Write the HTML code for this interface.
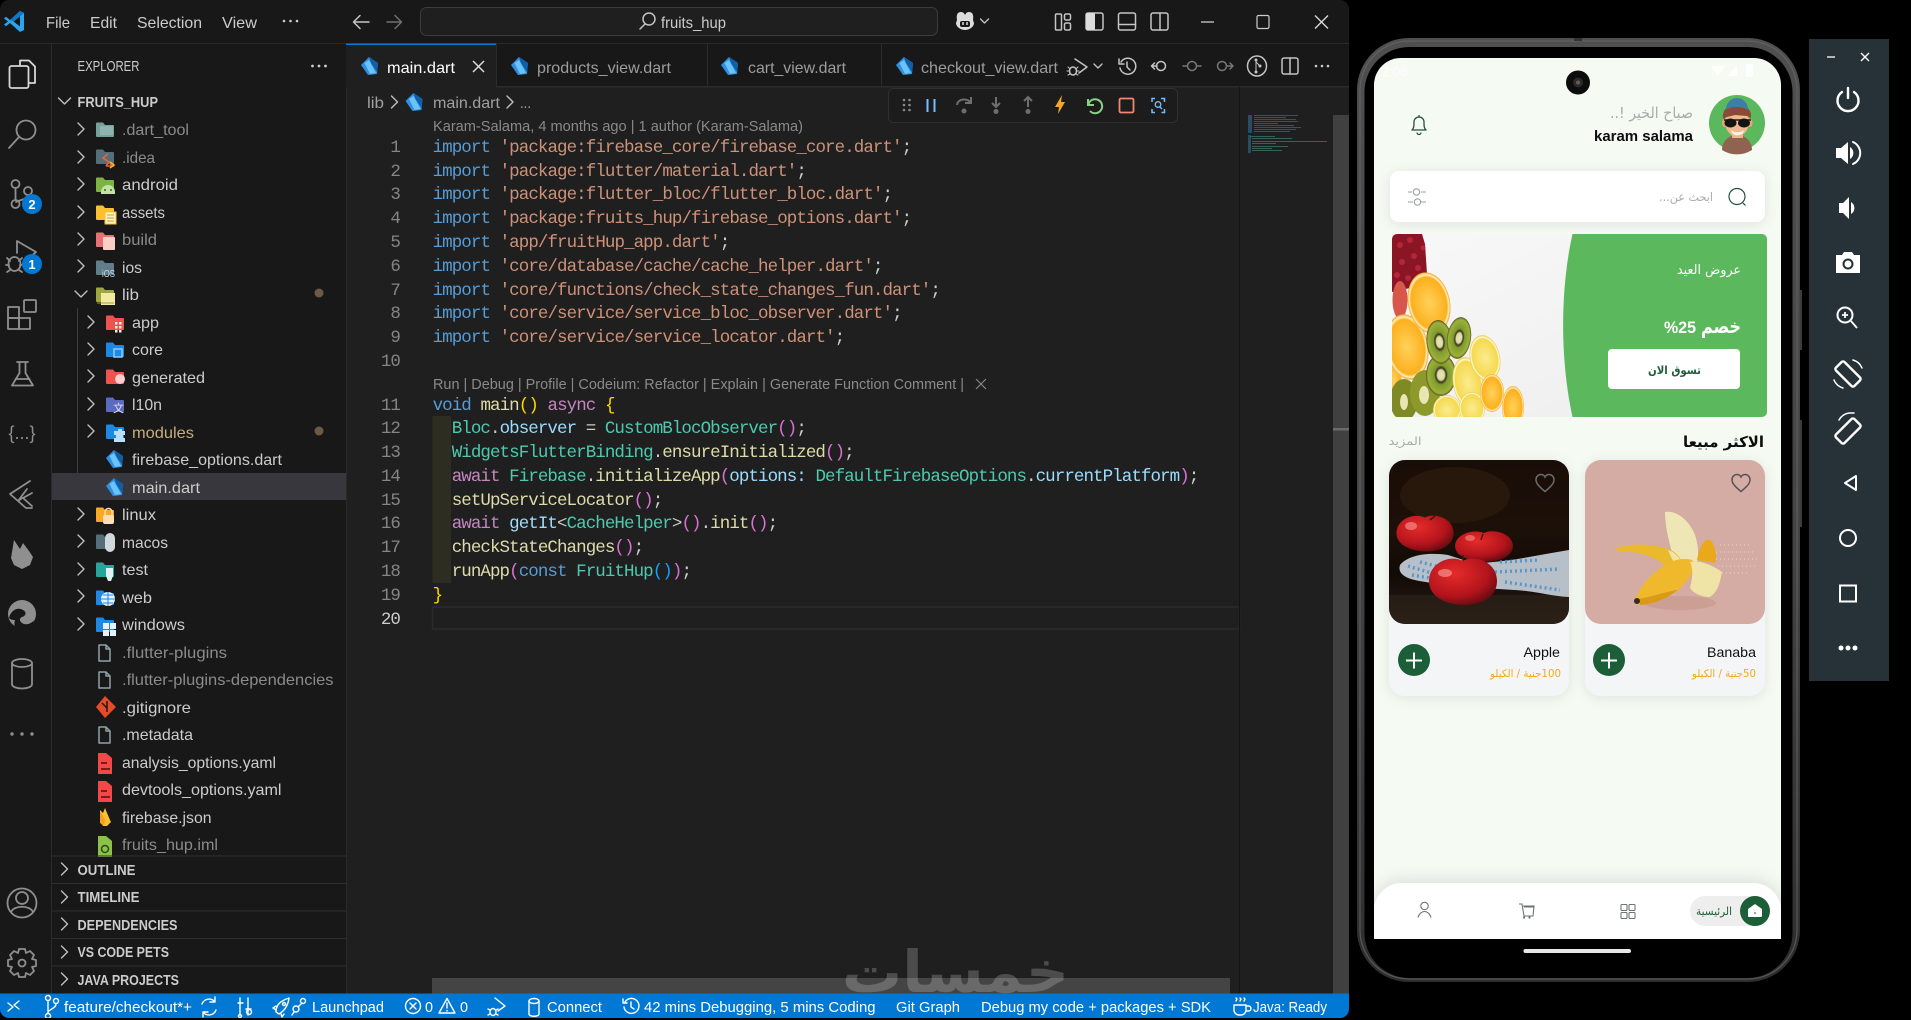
<!DOCTYPE html>
<html><head><meta charset="utf-8"><title>VS Code and Emulator</title>
<style>
html,body{margin:0;padding:0;background:#000;width:1911px;height:1020px;overflow:hidden}
svg{display:block}
text{font-family:"Liberation Sans",sans-serif;font-size:16px;fill:#ccc;white-space:pre}
.m{fill:#ccc}
.g{fill:#8b8b8b}
.b{font-weight:bold;font-size:14.5px;fill:#ccc}
.c{font-family:"Liberation Mono",monospace;font-size:17.5px;letter-spacing:-.93px;fill:#ccc}
.n{font-family:"Liberation Mono",monospace;font-size:17.5px;letter-spacing:-.93px;fill:#858585;text-anchor:end}
.s{font-size:15px;fill:#fff}
.a{font-family:"DejaVu Sans",sans-serif;direction:rtl}
.k{fill:#569cd6}.r{fill:#ce9178}.y{fill:#dcdcaa}.t{fill:#4ec9b0}.v{fill:#9cdcfe}.p{fill:#c586c0}.o{fill:#da70d6}.u{fill:#ffd700}.l{fill:#179fff}
.i{fill:none;stroke:#c4c4c4;stroke-width:1.5;stroke-linecap:round;stroke-linejoin:round}
.ab{fill:none;stroke:#8f8f8f;stroke-width:1.8;stroke-linecap:round;stroke-linejoin:round}
.st{fill:none;stroke:#fff;stroke-width:1.4;stroke-linecap:round;stroke-linejoin:round}
.ch{fill:none;stroke:#c0c0c0;stroke-width:1.4;stroke-linecap:round;stroke-linejoin:round}
.em{fill:none;stroke:#fff;stroke-width:2.4;stroke-linecap:round;stroke-linejoin:round}
</style></head><body>
<svg xmlns="http://www.w3.org/2000/svg" width="1911" height="1020" viewBox="0 0 1911 1020">
<defs>
<g id="dart"><path d="M8 0 17 6 16 17 7 18 0 8Z" fill="#2f8fe0"/><path d="M8 0 17 6 16 15 10 6Z" fill="#0f5ea6"/><path d="M3.500 6 8 3 15 16 9 17Z" fill="#6cc3fa"/></g>
<g id="chr"><path d="M-3-6 3 0-3 6" class="ch"/></g>
<g id="chd"><path d="M-6-3 0 3 6-3" class="ch"/></g>
<path id="fold" d="M0 1.500a1 1 0 0 1 1-1h6l2 2.500h8a1 1 0 0 1 1 1v10a1 1 0 0 1-1 1H1a1 1 0 0 1-1-1Z"/>
<path id="doc" d="M1 1h7l4 4v12H1ZM8 1v4h4" fill="none" stroke="#8ea2a8" stroke-width="1.500" stroke-linejoin="round"/>
<path id="heart" d="M10 18C4 13 1 10 1 6.200 1 3 3.500 1 6 1c1.800 0 3.200 1 4 2.500C10.800 2 12.200 1 14 1c2.500 0 5 2 5 5.200C19 10 16 13 10 18Z" fill="none" stroke-width="1.500"/>
<path id="apple" d="M0-20C10-27 34-20 34 0 34 17 17 24 2 24-15 24-34 17-34 0-34-18-13-27 0-20Z"/>
<linearGradient id="bgcurve" x1="0" y1="0" x2="1" y2="1"><stop offset="0" stop-color="#f8f8f8"/><stop offset="1" stop-color="#ededed"/></linearGradient>
<linearGradient id="apl" x1="0" y1="0" x2="0" y2="1"><stop offset="0" stop-color="#190d07"/><stop offset=".45" stop-color="#1c1008"/><stop offset=".7" stop-color="#120a06"/><stop offset="1" stop-color="#2a2018"/></linearGradient>
<radialGradient id="red" cx=".38" cy=".32" r=".75"><stop offset="0" stop-color="#e62b2a"/><stop offset=".65" stop-color="#b3141c"/><stop offset="1" stop-color="#5e0a10"/></radialGradient>
<radialGradient id="orng" cx=".5" cy=".5" r=".5"><stop offset="0" stop-color="#ffd25a"/><stop offset=".84" stop-color="#fcb01e"/><stop offset=".92" stop-color="#fff0c2"/><stop offset="1" stop-color="#f59e12"/></radialGradient>
<radialGradient id="lem" cx=".5" cy=".5" r=".5"><stop offset="0" stop-color="#fbec8e"/><stop offset=".84" stop-color="#f5d94f"/><stop offset=".92" stop-color="#fffbe3"/><stop offset="1" stop-color="#e8c22d"/></radialGradient>
<radialGradient id="kiwi" cx=".5" cy=".5" r=".5"><stop offset="0" stop-color="#e9e6b8"/><stop offset=".24" stop-color="#dcdca0"/><stop offset=".34" stop-color="#38331f"/><stop offset=".46" stop-color="#7f9a2d"/><stop offset=".88" stop-color="#9bb23a"/><stop offset="1" stop-color="#5e4d22"/></radialGradient>
<linearGradient id="frame" x1="0" y1="0" x2="0" y2="1"><stop offset="0" stop-color="#4f4f4f"/><stop offset=".5" stop-color="#444"/><stop offset="1" stop-color="#2e2e2e"/></linearGradient>
<clipPath id="win"><rect x="0" y="0" width="1349" height="1018" rx="9"/></clipPath>
<clipPath id="screen"><path d="M1374 939V85a27 27 0 0 1 27-27h353a27 27 0 0 1 27 27v854Z"/></clipPath>
<clipPath id="ban"><rect x="1392" y="234" width="375" height="183" rx="5"/></clipPath>
<clipPath id="cl1"><path d="M1389 608V476a16 16 0 0 1 16-16h148a16 16 0 0 1 16 16v132a16 16 0 0 1-16 16H1405a16 16 0 0 1-16-16Z"/></clipPath>
<filter id="sh" x="-20%" y="-20%" width="140%" height="140%"><feDropShadow dx="0" dy="2" stdDeviation="6" flood-color="#000" flood-opacity=".09"/></filter>
<filter id="sh2" x="-5%" y="-40%" width="110%" height="180%"><feDropShadow dx="0" dy="-2" stdDeviation="8" flood-color="#000" flood-opacity=".12"/></filter>
</defs>

<!-- VS CODE WINDOW -->
<g clip-path="url(#win)">
<rect width="1349" height="1018" fill="#181818"/>
<rect x="346" y="87" width="1003" height="907" fill="#1f1f1f"/>
<rect x="0" y="43" width="1349" height="1" fill="#2b2b2b"/>
<rect x="51" y="44" width="1" height="950" fill="#2b2b2b"/>
<rect x="346" y="44" width="1" height="950" fill="#2b2b2b"/>
<rect x="346" y="86" width="1003" height="1.500" fill="#2b2b2b"/>

<!-- Title bar -->
<path d="M20 11 10 20 6 16.800 4 18.500 8 21.500 4 24.500 6 26.200 10 23 20 32 24 30V13ZM20 16.500V26.500L13.500 21.500Z" fill="#2aa6ee" fill-rule="evenodd"/>
<path d="M20 11 10 20 13.500 21.500 20 16.500 24 13Z" fill="#1177c6"/>
<text x="46" y="28" textLength="24" lengthAdjust="spacingAndGlyphs">File</text>
<text x="90" y="28" textLength="27" lengthAdjust="spacingAndGlyphs">Edit</text>
<text x="137" y="28" textLength="65" lengthAdjust="spacingAndGlyphs">Selection</text>
<text x="222" y="28" textLength="35" lengthAdjust="spacingAndGlyphs">View</text>
<g fill="#ccc"><circle cx="284" cy="21" r="1.300"/><circle cx="290.500" cy="21" r="1.300"/><circle cx="297" cy="21" r="1.300"/></g>
<path d="M369 22H354M360 15.500 353.500 22 360 28.500" class="i" stroke="#ccc"/>
<path d="M387 22H401M395 15.500 401.500 22 395 28.500" class="ab" style="stroke:#6f6f6f;stroke-width:1.500"/>
<rect x="420.500" y="7.500" width="517" height="28" rx="6" fill="#1f1f1f" stroke="#3c3c3c"/>
<circle cx="649" cy="19" r="6" class="i"/><path d="M645 24 640 29" class="i"/>
<text x="661" y="28" textLength="65" lengthAdjust="spacingAndGlyphs">fruits_hup</text>
<!-- copilot -->
<path d="M957 20c-1-6 1-8 4-8 2 0 3 1 4 3 1-2 2-3 4-3 3 0 5 2 4 8l1 3c0 4-5 7-9 7s-9-3-9-7Z" fill="#ddd"/>
<rect x="960" y="21" width="10" height="6" rx="2" fill="#181818"/><path d="M963 22v3M967 22v3" stroke="#ddd" stroke-width="1.500"/>
<path d="M980.500 19 984.500 23 988.500 19" class="ch"/>
<!-- layout icons -->
<rect x="1055.500" y="14" width="6" height="16" rx="1" class="i"/><rect x="1064.500" y="14" width="6" height="6" rx="1.500" class="i"/><rect x="1064.500" y="23" width="6" height="7" rx="1.500" class="i"/>
<rect x="1086" y="13" width="17" height="17" rx="2" class="i" stroke="#ddd"/><rect x="1086" y="13" width="9" height="17" rx="1.500" fill="#ddd"/>
<rect x="1118.500" y="13" width="17" height="17" rx="2" class="i"/><path d="M1118.500 24.500h17" class="i"/>
<rect x="1151" y="13" width="17" height="17" rx="2" class="i"/><path d="M1160 13v17" class="i"/>
<path d="M1201 22h13" stroke="#ccc" stroke-width="1.300"/>
<rect x="1257" y="15.500" width="12" height="13" rx="1.500" fill="none" stroke="#ccc" stroke-width="1.200"/>
<path d="M1315 15.500 1328 28.500M1328 15.500 1315 28.500" stroke="#ddd" stroke-width="1.300"/>

<!-- Activity bar -->
<path d="M20 65V60.500h9l6 6V83h-6" class="ab" style="stroke:#d6d6d6"/><rect x="9.500" y="66" width="19" height="22" rx="2" class="ab" style="stroke:#d6d6d6"/>
<circle cx="26" cy="130" r="9.500" class="ab"/><path d="M19 137 9 148" class="ab"/>
<circle cx="15.500" cy="184" r="4" class="ab"/><circle cx="15.500" cy="204" r="4" class="ab"/><circle cx="28" cy="191" r="4" class="ab"/><path d="M15.500 188v12M28 195c0 4-8 5-12 7" class="ab"/>
<path d="M17 241v12M17 241 36 252 24 262" class="ab"/><ellipse cx="14.500" cy="264" rx="6" ry="7" class="ab"/><path d="M7 258l3 3M22 258l-3 3M6 265h3M20 265h3M7 272l3-2M22 272l-3-2" class="ab"/>
<rect x="8" y="318" width="11" height="11" class="ab"/><rect x="19" y="318" width="11" height="11" class="ab"/><rect x="8" y="307" width="11" height="11" class="ab"/><rect x="24" y="300" width="12" height="12" rx="1" class="ab"/>
<circle cx="32" cy="204" r="10" fill="#0078d4"/><text x="32" y="209" text-anchor="middle" style="font-size:13px;font-weight:bold;fill:#fff">2</text>
<circle cx="32" cy="264" r="10" fill="#0078d4"/><text x="32" y="269" text-anchor="middle" style="font-size:13px;font-weight:bold;fill:#fff">1</text>
<path d="M17 362h11M19.500 362v11L12 385.500h21L25.500 373v-11M15.500 379h14" class="ab"/>
<text x="22" y="439" text-anchor="middle" textLength="27" lengthAdjust="spacingAndGlyphs" style="font-size:18px;fill:#8f8f8f">{...}</text>
<path d="M30 481 10 494l8 7 9-12M32 506l-9-8 9-5M22 498l-4 3 8 7h6" class="ab"/>
<path d="M14 540l6 9 3-6 6 8 4 6-3 8-8 4-8-4-3-7Z" fill="#8f8f8f"/>
<circle cx="22" cy="614" r="14" fill="#8f8f8f"/><path d="M9 618c2-9 10-11 14-8 4 2 3 6-1 7-3 1-3 5 2 7 4 1 8-1 10-4-2 9-11 12-17 9-3-2-3-6-2-9-2 0-4 0-6-2Z" fill="#181818"/>
<path d="M12 663v21c0 6 20 6 20 0v-21" class="ab"/><ellipse cx="22" cy="663" rx="10" ry="4" class="ab"/>
<g fill="#8f8f8f"><circle cx="12" cy="734" r="1.700"/><circle cx="22" cy="734" r="1.700"/><circle cx="32" cy="734" r="1.700"/></g>
<circle cx="22" cy="903" r="14.500" class="ab"/><circle cx="22" cy="898" r="6" class="ab"/><path d="M11 912c3-7 19-7 22 0" class="ab"/>
<path d="M19 949h6l1 4 4-2 4 4-2 4 4 1v6l-4 1 2 4-4 4-4-2-1 4h-6l-1-4-4 2-4-4 2-4-4-1v-6l4-1-2-4 4-4 4 2Z" class="ab"/><circle cx="22" cy="963" r="3.500" class="ab"/>

<!-- Explorer -->
<text x="77.500" y="71" textLength="62" lengthAdjust="spacingAndGlyphs" style="font-size:14.500px">EXPLORER</text>
<g fill="#ccc"><circle cx="312.500" cy="66" r="1.400"/><circle cx="319" cy="66" r="1.400"/><circle cx="325.500" cy="66" r="1.400"/></g>
<use href="#chd" x="64.500" y="101"/>
<text class="b" x="77.500" y="107" textLength="80.500" lengthAdjust="spacingAndGlyphs">FRUITS_HUP</text>
<rect x="77" y="308" width="1" height="192" fill="#3d3d3d"/>
<rect x="52" y="473" width="294" height="27" fill="#37373d"/>

<!-- chevrons -->
<use href="#chr" x="81" y="129"/><use href="#chr" x="81" y="157"/><use href="#chr" x="81" y="184"/><use href="#chr" x="81" y="212"/><use href="#chr" x="81" y="239"/><use href="#chr" x="81" y="266"/><use href="#chd" x="81" y="294"/>
<use href="#chr" x="91" y="322"/><use href="#chr" x="91" y="349"/><use href="#chr" x="91" y="376"/><use href="#chr" x="91" y="404"/><use href="#chr" x="91" y="431"/>
<use href="#chr" x="81" y="514"/><use href="#chr" x="81" y="541"/><use href="#chr" x="81" y="569"/><use href="#chr" x="81" y="596"/><use href="#chr" x="81" y="624"/>

<!-- folders -->
<use href="#fold" x="96" y="122" fill="#78a09a"/><rect x="100" y="126" width="13" height="9" fill="#8fb3ae"/>
<use href="#fold" x="96" y="149" fill="#546e7a"/><path d="M108 154l-5 4 6 4-3 4M106 166h8l-4-2" fill="none" stroke="#e8643c" stroke-width="1.600"/><path d="M110 162l4 3-4 3" fill="none" stroke="#f5b324" stroke-width="1.600"/>
<use href="#fold" x="96" y="177" fill="#7cb342"/><path d="M101 192a7 7 0 0 1 14 0v2h-14Z" fill="#c5e1a5"/><circle cx="105" cy="190" r="1" fill="#33691e"/><circle cx="111" cy="190" r="1" fill="#33691e"/>
<use href="#fold" x="96" y="205" fill="#fbc02d"/><rect x="105" y="212" width="11" height="12" fill="#fff3c4" stroke="#fbc02d"/><path d="M107 215h7M107 218h7M107 221h7" stroke="#c9a227"/>
<use href="#fold" x="96" y="232" fill="#e57373"/><rect x="103" y="237" width="12" height="13" rx="1" fill="#f8d0c8"/>
<use href="#fold" x="96" y="260" fill="#607d8b"/><text x="102" y="277" textLength="13" lengthAdjust="spacingAndGlyphs" style="font-size:10px;fill:#cfd8dc">iOS</text>
<use href="#fold" x="96" y="287" fill="#9ea640"/><rect x="101" y="293" width="14" height="12" fill="#f2e9a3"/><path d="M97 303h17l-3 0" stroke="#9ea640"/>
<use href="#fold" x="106" y="315" fill="#ef5350"/><g fill="#fbe9e7"><rect x="115" y="322" width="2.500" height="2.500"/><rect x="119" y="322" width="2.500" height="2.500"/><rect x="115" y="326" width="2.500" height="2.500"/><rect x="119" y="326" width="2.500" height="2.500"/><rect x="115" y="330" width="2.500" height="2.500"/><rect x="119" y="330" width="2.500" height="2.500"/></g>
<use href="#fold" x="106" y="342" fill="#1e88e5"/><rect x="114" y="349" width="8" height="8" fill="none" stroke="#90caf9" stroke-width="1.500"/>
<use href="#fold" x="106" y="369" fill="#ef5350"/><circle cx="120" cy="379" r="5" fill="#ffcdd2"/>
<use href="#fold" x="106" y="397" fill="#5c6bc0"/><text x="113" y="412" style="font-size:11px;fill:#dfe3f5;font-family:'Liberation Sans','Noto Sans CJK SC',sans-serif">文</text>
<use href="#fold" x="106" y="424" fill="#1e88e5"/><path d="M114 431h4v-2h4v2h3v4h-2v3h2v4h-11v-4h2v-3h-2Z" fill="#bbdefb"/>
<use href="#dart" x="106" y="450"/><use href="#dart" x="106" y="478"/>
<use href="#fold" x="96" y="507" fill="#f9a825"/><rect x="103" y="515" width="11" height="9" rx="2" fill="#ffe0b2"/><path d="M105 515v-3a3.500 3.500 0 0 1 7 0v3" fill="none" stroke="#ffe0b2" stroke-width="1.500"/>
<use href="#fold" x="96" y="534" fill="#546e7a"/><path d="M105 538a5 5 0 0 1 10 0v9c0 3-3 5-5 5s-5-2-5-5Z" fill="#cfd8dc"/>
<use href="#fold" x="96" y="562" fill="#26a69a"/><path d="M106 568h7v8l-2 5h-3l-2-5Z" fill="#e0f2f1"/>
<use href="#fold" x="96" y="590" fill="#1e88e5"/><circle cx="108" cy="599" r="7" fill="#e3f2fd"/><path d="M101 599h14M108 592v14M103 595h10M103 603h10" stroke="#1e88e5"/>
<use href="#fold" x="96" y="617" fill="#1e88e5"/><g fill="#e3f2fd"><rect x="103" y="623" width="6" height="6"/><rect x="110" y="623" width="6" height="6"/><rect x="103" y="630" width="6" height="6"/><rect x="110" y="630" width="6" height="6"/></g>

<!-- file icons -->
<use href="#doc" x="98" y="644"/>
<use href="#doc" x="98" y="671"/>
<path d="M105 696 116 707 105 718 96 707Z" fill="#e64a28"/><path d="M102 703l5 5M107 701v11" stroke="#1b1b1b" stroke-width="1.500"/>
<use href="#doc" x="98" y="726"/>
<path d="M98 753h8l6 5v16H98Z" fill="#f44747"/><path d="M101 763h6M101 769h9" stroke="#4a1010" stroke-width="1.600"/>
<path d="M98 781h8l6 5v16H98Z" fill="#f44747"/><path d="M101 791h6M101 797h9" stroke="#4a1010" stroke-width="1.600"/>
<path d="M100 810l3 3 2-5 5 12 1 2-4 4-4 0-3-4Z" fill="#fbc02d"/><path d="M100 810l5 10-1 6-4-3Z" fill="#f6a021"/>
<path d="M98 836h8l6 5v16H98Z" fill="#8bc34a"/><circle cx="105" cy="849" r="3.500" fill="none" stroke="#2e4a12" stroke-width="1.500"/>

<!-- file text -->
<text class="g" x="122" y="135" textLength="67" lengthAdjust="spacingAndGlyphs">.dart_tool</text>
<text class="g" x="122" y="163" textLength="33" lengthAdjust="spacingAndGlyphs">.idea</text>
<text x="122" y="190" textLength="56" lengthAdjust="spacingAndGlyphs">android</text>
<text x="122" y="218" textLength="43" lengthAdjust="spacingAndGlyphs">assets</text>
<text class="g" x="122" y="245" textLength="35" lengthAdjust="spacingAndGlyphs">build</text>
<text x="122" y="273" textLength="20" lengthAdjust="spacingAndGlyphs">ios</text>
<text x="122" y="300" textLength="17" lengthAdjust="spacingAndGlyphs">lib</text>
<text x="132" y="328" textLength="27" lengthAdjust="spacingAndGlyphs">app</text>
<text x="132" y="355" textLength="31" lengthAdjust="spacingAndGlyphs">core</text>
<text x="132" y="383" textLength="73" lengthAdjust="spacingAndGlyphs">generated</text>
<text x="132" y="410" textLength="30" lengthAdjust="spacingAndGlyphs">l10n</text>
<text x="132" y="438" textLength="62" lengthAdjust="spacingAndGlyphs" style="fill:#c6ad7c">modules</text>
<text x="132" y="465" textLength="150" lengthAdjust="spacingAndGlyphs">firebase_options.dart</text>
<text x="132" y="493" textLength="68" lengthAdjust="spacingAndGlyphs">main.dart</text>
<text x="122" y="520" textLength="34" lengthAdjust="spacingAndGlyphs">linux</text>
<text x="122" y="548" textLength="46" lengthAdjust="spacingAndGlyphs">macos</text>
<text x="122" y="575" textLength="26" lengthAdjust="spacingAndGlyphs">test</text>
<text x="122" y="603" textLength="30" lengthAdjust="spacingAndGlyphs">web</text>
<text x="122" y="630" textLength="63" lengthAdjust="spacingAndGlyphs">windows</text>
<text class="g" x="122" y="658" textLength="105" lengthAdjust="spacingAndGlyphs">.flutter-plugins</text>
<text class="g" x="122" y="685" textLength="211.500" lengthAdjust="spacingAndGlyphs">.flutter-plugins-dependencies</text>
<text x="122" y="713" textLength="69" lengthAdjust="spacingAndGlyphs">.gitignore</text>
<text x="122" y="740" textLength="71" lengthAdjust="spacingAndGlyphs">.metadata</text>
<text x="122" y="768" textLength="154" lengthAdjust="spacingAndGlyphs">analysis_options.yaml</text>
<text x="122" y="795" textLength="159.500" lengthAdjust="spacingAndGlyphs">devtools_options.yaml</text>
<text x="122" y="823" textLength="89.500" lengthAdjust="spacingAndGlyphs">firebase.json</text>
<text class="g" x="122" y="850" textLength="96" lengthAdjust="spacingAndGlyphs">fruits_hup.iml</text>
<circle cx="319" cy="293" r="4.500" fill="#6b5a45"/><circle cx="319" cy="431" r="4.500" fill="#6b5a45"/>

<!-- Sections -->
<rect x="52" y="855.500" width="294" height="1" fill="#2f2f2f"/><rect x="52" y="883" width="294" height="1" fill="#2f2f2f"/><rect x="52" y="910.500" width="294" height="1" fill="#2f2f2f"/><rect x="52" y="938" width="294" height="1" fill="#2f2f2f"/><rect x="52" y="965.500" width="294" height="1" fill="#2f2f2f"/>
<use href="#chr" x="64.500" y="869"/><use href="#chr" x="64.500" y="897"/><use href="#chr" x="64.500" y="924"/><use href="#chr" x="64.500" y="952"/><use href="#chr" x="64.500" y="979"/>
<text class="b" x="77.500" y="875" textLength="58" lengthAdjust="spacingAndGlyphs">OUTLINE</text>
<text class="b" x="77.500" y="902" textLength="62" lengthAdjust="spacingAndGlyphs">TIMELINE</text>
<text class="b" x="77.500" y="930" textLength="100" lengthAdjust="spacingAndGlyphs">DEPENDENCIES</text>
<text class="b" x="77.500" y="957" textLength="91.500" lengthAdjust="spacingAndGlyphs">VS CODE PETS</text>
<text class="b" x="77.500" y="985" textLength="101.500" lengthAdjust="spacingAndGlyphs">JAVA PROJECTS</text>

<!-- Tabs -->
<rect x="346" y="44" width="150" height="43.500" fill="#1f1f1f"/><rect x="346" y="43.500" width="150" height="1.500" fill="#0078d4"/>
<rect x="496" y="44" width="1" height="43" fill="#2b2b2b"/><rect x="707" y="44" width="1" height="43" fill="#2b2b2b"/><rect x="881" y="44" width="1" height="43" fill="#2b2b2b"/>
<use href="#dart" x="361" y="57"/><text x="387" y="73" textLength="68" lengthAdjust="spacingAndGlyphs" style="fill:#fff">main.dart</text>
<path d="M473 61 484 72M484 61 473 72" stroke="#ddd" stroke-width="1.500"/>
<use href="#dart" x="511" y="57"/><text x="537" y="73" textLength="134" lengthAdjust="spacingAndGlyphs" style="fill:#9d9d9d">products_view.dart</text>
<use href="#dart" x="721" y="57"/><text x="748" y="73" textLength="98" lengthAdjust="spacingAndGlyphs" style="fill:#9d9d9d">cart_view.dart</text>
<use href="#dart" x="896" y="57"/><text x="921" y="73" textLength="137" lengthAdjust="spacingAndGlyphs" style="fill:#9d9d9d">checkout_view.dart</text>
<!-- editor actions -->
<path d="M1075 59 1087 67 1079 73" class="i"/><ellipse cx="1073" cy="71" rx="3.500" ry="4" class="i"/><path d="M1068 67l2 2M1078 67l-2 2M1067 71h2M1077 71h2M1068 75l2-1M1078 75l-2-1" class="i" style="stroke-width:1"/>
<path d="M1094 64l4 4 4-4" class="ch"/>
<path d="M1121 62a8 8 0 1 1-1 6M1119 59v5h5M1127 62v5l3 3" class="i"/>
<circle cx="1161" cy="66" r="4.500" class="i"/><path d="M1157 66h-5M1154.500 63l-3 3 3 3" class="i"/>
<circle cx="1192" cy="66" r="4.500" class="i" style="stroke:#777"/><path d="M1187 66h-4M1197 66h4" class="i" style="stroke:#777"/>
<circle cx="1222" cy="66" r="4.500" class="i" style="stroke:#777"/><path d="M1227 66h5M1230 63l3 3-3 3" class="i" style="stroke:#777"/>
<ellipse cx="1257" cy="66" rx="9.500" ry="10" class="i"/><circle cx="1256" cy="60" r="1.500" fill="#ccc"/><circle cx="1256" cy="72" r="1.500" fill="#ccc"/><circle cx="1260" cy="66" r="1.500" fill="#ccc"/><path d="M1256 60v12M1256 62l4 4" class="i" style="stroke-width:1"/>
<rect x="1282" y="58" width="16" height="16" rx="2" class="i"/><path d="M1290 58v16" class="i"/>
<g fill="#ccc"><circle cx="1316" cy="66" r="1.300"/><circle cx="1322" cy="66" r="1.300"/><circle cx="1328" cy="66" r="1.300"/></g>

<!-- Breadcrumb -->
<text x="367" y="108" textLength="17" lengthAdjust="spacingAndGlyphs" style="fill:#a0a0a0">lib</text>
<use href="#chr" x="394.500" y="102"/>
<use href="#dart" x="405.500" y="93"/>
<text x="433" y="108" textLength="67" lengthAdjust="spacingAndGlyphs" style="fill:#a0a0a0">main.dart</text>
<use href="#chr" x="510" y="102"/>
<text x="520" y="108" textLength="11" lengthAdjust="spacingAndGlyphs" style="fill:#a0a0a0">...</text>

<!-- Blame -->
<text x="433" y="131" textLength="370" lengthAdjust="spacingAndGlyphs" style="font-size:15px;fill:#8a8a8a">Karam-Salama, 4 months ago | 1 author (Karam-Salama)</text>

<!-- Editor decor -->
<rect x="432.500" y="416" width="18.500" height="167" fill="#2e2d22"/>
<rect x="432.500" y="607" width="807" height="22" fill="none" stroke="#2b2b2b" stroke-width="1.500"/>

<!-- Line numbers -->
<g>
<text class="n" x="400" y="152">1</text><text class="n" x="400" y="176">2</text><text class="n" x="400" y="199">3</text><text class="n" x="400" y="223">4</text><text class="n" x="400" y="247">5</text><text class="n" x="400" y="271">6</text><text class="n" x="400" y="295">7</text><text class="n" x="400" y="318">8</text><text class="n" x="400" y="342">9</text><text class="n" x="400" y="366">10</text>
<text class="n" x="400" y="410">11</text><text class="n" x="400" y="433">12</text><text class="n" x="400" y="457">13</text><text class="n" x="400" y="481">14</text><text class="n" x="400" y="505">15</text><text class="n" x="400" y="528">16</text><text class="n" x="400" y="552">17</text><text class="n" x="400" y="576">18</text><text class="n" x="400" y="600">19</text><text class="n" x="400" y="624" style="fill:#ccc">20</text>
</g>
<!-- Code -->
<text class="c" x="432.600" y="152"><tspan class="k">import</tspan> <tspan class="r">'package:firebase_core/firebase_core.dart'</tspan>;</text>
<text class="c" x="432.600" y="176"><tspan class="k">import</tspan> <tspan class="r">'package:flutter/material.dart'</tspan>;</text>
<text class="c" x="432.600" y="199"><tspan class="k">import</tspan> <tspan class="r">'package:flutter_bloc/flutter_bloc.dart'</tspan>;</text>
<text class="c" x="432.600" y="223"><tspan class="k">import</tspan> <tspan class="r">'package:fruits_hup/firebase_options.dart'</tspan>;</text>
<text class="c" x="432.600" y="247"><tspan class="k">import</tspan> <tspan class="r">'app/fruitHup_app.dart'</tspan>;</text>
<text class="c" x="432.600" y="271"><tspan class="k">import</tspan> <tspan class="r">'core/database/cache/cache_helper.dart'</tspan>;</text>
<text class="c" x="432.600" y="295"><tspan class="k">import</tspan> <tspan class="r">'core/functions/check_state_changes_fun.dart'</tspan>;</text>
<text class="c" x="432.600" y="318"><tspan class="k">import</tspan> <tspan class="r">'core/service/service_bloc_observer.dart'</tspan>;</text>
<text class="c" x="432.600" y="342"><tspan class="k">import</tspan> <tspan class="r">'core/service/service_locator.dart'</tspan>;</text>
<text x="433" y="389" textLength="531" lengthAdjust="spacingAndGlyphs" style="font-size:15px;fill:#8a8a8a">Run | Debug | Profile | Codeium: Refactor | Explain | Generate Function Comment |</text>
<path d="M976 379 986 389M986 379 976 389" stroke="#8a8a8a" stroke-width="1.100"/>
<text class="c" x="432.600" y="410"><tspan class="k">void</tspan> <tspan class="y">main</tspan><tspan class="u">()</tspan> <tspan class="p">async</tspan> <tspan class="u">{</tspan></text>
<text class="c" x="451.700" y="433"><tspan class="t">Bloc</tspan>.<tspan class="v">observer</tspan> = <tspan class="t">CustomBlocObserver</tspan><tspan class="o">()</tspan>;</text>
<text class="c" x="451.700" y="457"><tspan class="t">WidgetsFlutterBinding</tspan>.<tspan class="y">ensureInitialized</tspan><tspan class="o">()</tspan>;</text>
<text class="c" x="451.700" y="481"><tspan class="p">await</tspan> <tspan class="t">Firebase</tspan>.<tspan class="y">initializeApp</tspan><tspan class="o">(</tspan><tspan class="v">options:</tspan> <tspan class="t">DefaultFirebaseOptions</tspan>.<tspan class="v">currentPlatform</tspan><tspan class="o">)</tspan>;</text>
<text class="c" x="451.700" y="505"><tspan class="y">setUpServiceLocator</tspan><tspan class="o">()</tspan>;</text>
<text class="c" x="451.700" y="528"><tspan class="p">await</tspan> <tspan class="v">getIt</tspan>&lt;<tspan class="t">CacheHelper</tspan>&gt;<tspan class="o">()</tspan>.<tspan class="y">init</tspan><tspan class="o">()</tspan>;</text>
<text class="c" x="451.700" y="552"><tspan class="y">checkStateChanges</tspan><tspan class="o">()</tspan>;</text>
<text class="c" x="451.700" y="576"><tspan class="y">runApp</tspan><tspan class="o">(</tspan><tspan class="k">const</tspan> <tspan class="t">FruitHup</tspan><tspan class="l">()</tspan><tspan class="o">)</tspan>;</text>
<text class="c u" x="432.600" y="600">}</text>

<!-- minimap + scrollbars -->
<rect x="1239" y="87" width="1" height="907" fill="#141414"/>
<g opacity=".5">
<g fill="#2f7fa8"><rect x="1248" y="115" width="4" height="18"/><rect x="1248" y="135" width="3" height="18"/></g>
<g fill="#9a6f50"><rect x="1254" y="115" width="44" height="1"/><rect x="1254" y="117" width="32" height="1"/><rect x="1254" y="119" width="42" height="1"/><rect x="1254" y="121" width="44" height="1"/><rect x="1254" y="123" width="24" height="1"/><rect x="1254" y="125" width="40" height="1"/><rect x="1254" y="127" width="47" height="1"/><rect x="1254" y="129" width="42" height="1"/><rect x="1254" y="131" width="36" height="1"/></g>
<g fill="#4ea38f"><rect x="1250" y="136" width="25" height="1"/><rect x="1252" y="138" width="40" height="1"/><rect x="1252" y="141" width="75" height="1"/><rect x="1252" y="143" width="24" height="1"/><rect x="1252" y="146" width="36" height="1"/><rect x="1252" y="148" width="20" height="1"/><rect x="1252" y="150" width="30" height="1"/></g>
</g>
<rect x="1333" y="115" width="16" height="879" fill="#404040"/>
<rect x="1333" y="428" width="16" height="2.500" fill="#6a6a6a"/>
<rect x="432" y="978" width="798" height="15.500" fill="#444"/>

<!-- Debug toolbar -->
<rect x="888.500" y="88.500" width="289" height="34" rx="5" fill="#1c1c1c" stroke="#303030"/>
<g fill="#8a8a8a"><circle cx="904" cy="100" r="1.300"/><circle cx="909.500" cy="100" r="1.300"/><circle cx="904" cy="105" r="1.300"/><circle cx="909.500" cy="105" r="1.300"/><circle cx="904" cy="110" r="1.300"/><circle cx="909.500" cy="110" r="1.300"/></g>
<path d="M927.500 99v13M934.500 99v13" stroke="#75beff" stroke-width="2"/>
<path d="M957 105c1-7 11-7 14-2M971 97v6h-6" fill="none" stroke="#6e6e6e" stroke-width="2"/><circle cx="964" cy="111" r="2.500" fill="#6e6e6e"/>
<path d="M996 97v10M992 103l4 4 4-4" fill="none" stroke="#6e6e6e" stroke-width="2"/><circle cx="996" cy="111.500" r="2.500" fill="#6e6e6e"/>
<path d="M1028 107V97M1024 101l4-4 4 4" fill="none" stroke="#6e6e6e" stroke-width="2"/><circle cx="1028" cy="111.500" r="2.500" fill="#6e6e6e"/>
<path d="M1062 95 1055 107h4l-1 7 7-12h-4Z" fill="#f5a623"/>
<path d="M1088 99v6h6M1088.500 104a7 7 0 1 1 1.500 7" fill="none" stroke="#89d185" stroke-width="2"/>
<rect x="1119.500" y="98.500" width="14" height="14" rx="1.500" fill="none" stroke="#f48771" stroke-width="1.800"/>
<path d="M1152 102v-3.500h3M1161 98.500h3.500v3.500M1164.500 109v3.500h-3M1155 112.500h-3V109" fill="none" stroke="#75beff" stroke-width="1.500"/><circle cx="1158" cy="104.500" r="2.800" fill="none" stroke="#75beff" stroke-width="1.300"/><path d="M1160 107l2 2" stroke="#75beff" stroke-width="1.300"/>

<!-- Status bar -->
<rect x="0" y="993.500" width="1349" height="24.500" fill="#0078d4"/>
<path d="M8 1003 13 1007 8 1011M19 1001 14 1005 19 1009" class="st"/>
<circle cx="48" cy="998" r="2.500" class="st"/><circle cx="48" cy="1016" r="2.500" class="st"/><circle cx="56" cy="1001" r="2.500" class="st"/><path d="M48 1001v12M56 1004c0 4-6 5-8 8" class="st"/>
<text class="s" x="64" y="1012" textLength="128" lengthAdjust="spacingAndGlyphs">feature/checkout*+</text>
<path d="M202 1004a7.500 7.500 0 0 1 13-2M216 1010a7.500 7.500 0 0 1-13 2M215 997v5h-5M203 1017v-5h5" class="st"/>
<path d="M240 998v17M248 998v17M238 1003h5M246 1009h5" class="st"/><circle cx="240" cy="1016" r="1.500" class="st"/><circle cx="249" cy="1012" r="2.500" class="st"/>
<path d="M276 1012c0-7 4-11 13-14-1 8-5 13-10 16ZM276 1006l-3 2 3 2M281 1014l1 3 2-3" class="st"/><circle cx="284" cy="1004" r="1.500" class="st"/>
<circle cx="296" cy="1009" r="3" class="st"/><circle cx="303" cy="1001" r="2.500" class="st"/><path d="M298 1007l4-4M294 1012l-2 3" class="st"/>
<text class="s" x="312" y="1012" textLength="72" lengthAdjust="spacingAndGlyphs">Launchpad</text>
<circle cx="413" cy="1006" r="7.500" class="st"/><path d="M410 1003l6 6M416 1003l-6 6" class="st"/>
<text class="s" x="425" y="1012" textLength="8" lengthAdjust="spacingAndGlyphs">0</text>
<path d="M447 998.500 455 1013H439ZM447 1003v5M447 1010.500v.500" class="st"/>
<text class="s" x="460" y="1012" textLength="8" lengthAdjust="spacingAndGlyphs">0</text>
<path d="M495 998 505 1006 498 1011" class="st"/><ellipse cx="493" cy="1012" rx="3" ry="3.500" class="st"/><path d="M488 1009l2 1M498 1009l-2 1M488 1015l2-1M498 1015l-2-1" class="st"/>
<path d="M529 1001v13c0 3 10 3 10 0v-13" class="st"/><ellipse cx="534" cy="1001" rx="5" ry="2.500" class="st"/>
<text class="s" x="547" y="1012" textLength="55" lengthAdjust="spacingAndGlyphs">Connect</text>
<path d="M625 1002a7.500 7.500 0 1 1-1 5M623 999v4h4M631 1002v5l3 2" class="st"/>
<text class="s" x="644" y="1012" textLength="231.500" lengthAdjust="spacingAndGlyphs">42 mins Debugging, 5 mins Coding</text>
<text class="s" x="896" y="1012" textLength="64" lengthAdjust="spacingAndGlyphs">Git Graph</text>
<text class="s" x="981" y="1012" textLength="230" lengthAdjust="spacingAndGlyphs">Debug my code + packages + SDK</text>
<path d="M1234 1005h12v5a5 5 0 0 1-5 5h-2a5 5 0 0 1-5-5ZM1246 1006h2.500a2 2 0 0 1 0 5H1246M1236 1001l1-2-1-1M1240 1001l1-2-1-1M1244 1001l1-2-1-1" class="st"/>
<text class="s" x="1253" y="1012" textLength="74" lengthAdjust="spacingAndGlyphs">Java: Ready</text>

<!-- Watermark -->
<text class="a" x="1069" y="992" textLength="227" lengthAdjust="spacingAndGlyphs" style="font-size:58px;font-weight:bold;fill:#fff;opacity:.2">خمسات</text>
</g>

<!-- PHONE -->
<rect x="1357" y="38" width="443" height="944" rx="52" fill="url(#frame)"/>
<rect x="1360" y="41" width="437" height="938" rx="49" fill="none" stroke="#6a6a6a" stroke-width="1.200" opacity=".7"/>
<rect x="1364.500" y="47" width="428" height="931" rx="45" fill="#000"/>
<rect x="1800" y="290" width="2" height="60" fill="#3c3c3c"/><rect x="1800" y="420" width="2" height="107" fill="#3c3c3c"/>
<rect x="1574" y="38" width="8" height="3" fill="#333"/>
<g clip-path="url(#screen)">
<rect x="1374" y="58" width="407" height="881" fill="#f5faf3"/>
<!-- status -->
<text x="1382" y="76" style="font-size:13px;fill:#fff;opacity:.75">2:08</text>
<path d="M1711 66h14l-7 10Z" fill="#fff"/><path d="M1727 76l10-10v10Z" fill="#fff" opacity=".85"/><rect x="1746" y="64" width="7" height="13" rx="1.500" fill="#fff"/>
<!-- header -->
<circle cx="1737" cy="123" r="28" fill="#5cb85c"/>
<path d="M1722 150c0-8 6-15 15-15s15 7 15 15a28 28 0 0 1-30 0Z" fill="#8f6350"/>
<rect x="1732" y="130" width="11" height="8" fill="#f0b48a"/>
<ellipse cx="1737" cy="122" rx="12" ry="14.500" fill="#f1b88f"/>
<ellipse cx="1724.500" cy="123" rx="2.500" ry="4" fill="#e8a578"/><ellipse cx="1750" cy="123" rx="2.500" ry="4" fill="#e8a578"/>
<path d="M1723 119c-1-9 5-15 14-15s15 6 14 14l-4-2-12-1-8 2Z" fill="#8a4a36"/>
<path d="M1726 110c0-8 6-12 11-12s11 4 11 12c-6-4-16-4-22 0Z" fill="#3b7ea8"/>
<path d="M1724 120h27" stroke="#1b1b1b" stroke-width="1.500"/>
<ellipse cx="1730.500" cy="123" rx="6" ry="4.500" fill="#141414"/><ellipse cx="1744" cy="123" rx="6" ry="4.500" fill="#141414"/>
<path d="M1731 130c3 3 10 3 13 0l-1 3c-3 3-9 3-11 0Z" fill="#f8f3ea"/>
<text class="a" x="1693" y="118" textLength="83" lengthAdjust="spacingAndGlyphs" style="font-size:15px;fill:#a9adaa">صباح الخير !..</text>
<text x="1594" y="141" textLength="99" lengthAdjust="spacingAndGlyphs" style="font-size:15px;font-weight:bold;fill:#0c0d0d">karam salama</text>
<path d="M1412 130c2-2 2-4 2-8a5 5 0 0 1 10 0c0 4 0 6 2 8ZM1419 115v2M1417 132.500a2 2 0 0 0 4 0" fill="none" stroke="#24513a" stroke-width="1.300" stroke-linejoin="round"/>
<!-- camera -->
<circle cx="1578" cy="82.500" r="12" fill="#0c0c0c"/><circle cx="1578" cy="82.500" r="5" fill="#2b2b2b"/><circle cx="1578" cy="82.500" r="2" fill="#6b5a52"/>
<!-- search -->
<rect x="1390" y="171" width="375" height="51" rx="9" fill="#fff" filter="url(#sh)"/>
<circle cx="1737" cy="196.500" r="8" fill="none" stroke="#24513a" stroke-width="1.200"/><path d="M1743 203l2.500 2.500" stroke="#24513a" stroke-width="1.200"/>
<text class="a" x="1713" y="201" textLength="54" lengthAdjust="spacingAndGlyphs" style="font-size:12px;fill:#a9adaa">ابحث عن...</text>
<path d="M1408 192h4M1421 192h5M1408 202h5M1421 202h5" stroke="#9aa0a0" stroke-width="1.100"/><circle cx="1416.500" cy="192" r="3.200" fill="none" stroke="#9aa0a0" stroke-width="1.100"/><circle cx="1417.500" cy="202" r="3.200" fill="none" stroke="#9aa0a0" stroke-width="1.100"/>
<!-- banner -->
<g clip-path="url(#ban)">
<rect x="1392" y="234" width="375" height="183" fill="url(#bgcurve)"/>
<path d="M1392 234h30l3 10 2 30-8 12-27 6Z" fill="#8a1525"/>
<g fill="#b52638"><circle cx="1400" cy="245" r="3"/><circle cx="1410" cy="240" r="3"/><circle cx="1414" cy="256" r="3"/><circle cx="1402" cy="262" r="3"/><circle cx="1418" cy="268" r="3"/><circle cx="1397" cy="275" r="3"/><circle cx="1408" cy="278" r="3"/><circle cx="1423" cy="248" r="2.500"/></g>
<ellipse cx="1400" cy="300" rx="7.500" ry="19" fill="#d9574a"/>
<ellipse cx="1394" cy="383" rx="8" ry="28" fill="url(#orng)"/>
<ellipse cx="1407" cy="347" rx="21" ry="33" transform="rotate(-10 1407 347)" fill="url(#orng)"/>
<ellipse cx="1429" cy="303" rx="21" ry="31" transform="rotate(-12 1429 303)" fill="url(#orng)"/>
<ellipse cx="1404" cy="400" rx="14" ry="21" fill="#7f8a25"/><ellipse cx="1404" cy="402" rx="4" ry="8" fill="#e9e5b5"/>
<ellipse cx="1425" cy="393" rx="15" ry="23" fill="#8d9a2b"/><ellipse cx="1424" cy="395" rx="5" ry="9" fill="#e9e5b5"/>
<ellipse cx="1441" cy="375" rx="15" ry="21" fill="url(#kiwi)"/>
<ellipse cx="1439.500" cy="342" rx="13" ry="22" transform="rotate(-6 1439 342)" fill="url(#kiwi)"/>
<ellipse cx="1459" cy="338" rx="12" ry="21" transform="rotate(8 1459 338)" fill="url(#kiwi)"/>
<ellipse cx="1468" cy="383" rx="15" ry="26" transform="rotate(-10 1468 383)" fill="url(#lem)"/>
<ellipse cx="1485" cy="358" rx="15" ry="23" transform="rotate(-12 1485 358)" fill="url(#lem)"/>
<ellipse cx="1447" cy="410" rx="14" ry="15" fill="url(#lem)"/>
<ellipse cx="1472" cy="408" rx="13" ry="16" fill="url(#lem)"/>
<ellipse cx="1492" cy="393" rx="12" ry="19" fill="url(#orng)"/>
<ellipse cx="1513" cy="407" rx="11" ry="21" fill="url(#orng)"/>
<path d="M1572.500 234C1560 290 1560 360 1572.500 417H1767V234Z" fill="#5cb85c"/>
</g>
<text class="a" x="1741" y="274" textLength="64" lengthAdjust="spacingAndGlyphs" style="font-size:13px;fill:#fff">عروض العيد</text>
<text class="a" x="1741" y="333" textLength="40" lengthAdjust="spacingAndGlyphs" style="font-size:20px;font-weight:bold;fill:#fff">خصم</text>
<text x="1664" y="333" textLength="32" lengthAdjust="spacingAndGlyphs" style="font-size:17px;font-weight:bold;fill:#fff">%25</text>
<rect x="1608" y="349" width="132" height="40" rx="4" fill="#fff"/>
<text class="a" x="1701" y="374" textLength="53" lengthAdjust="spacingAndGlyphs" style="font-size:11.500px;font-weight:bold;fill:#1f5e3b">تسوق الان</text>
<!-- section head -->
<text class="a" x="1764" y="447" textLength="81" lengthAdjust="spacingAndGlyphs" style="font-size:15px;font-weight:bold;fill:#0c0d0d">الاكثر مبيعا</text>
<text class="a" x="1421.500" y="445" textLength="33" lengthAdjust="spacingAndGlyphs" style="font-size:11.500px;fill:#a9adaa">المزيد</text>
<!-- Card left -->
<rect x="1389" y="460" width="180" height="236" rx="16" fill="#f3f5f7" filter="url(#sh)"/>
<g clip-path="url(#cl1)">
<rect x="1389" y="460" width="180" height="164" fill="url(#apl)"/>
<ellipse cx="1455" cy="495" rx="55" ry="28" fill="#33200f" opacity=".55"/>
<path d="M1389 595h180v29h-180Z" fill="#2b2118" opacity=".7"/>
<path d="M1400 565c8-10 28-13 48-10l25 8c30 0 60-7 96-13v47c-20-1-32-6-55-7-30-2-62-4-80-7-18-2-38-5-34-18Z" fill="#b7c0c9"/>
<path d="M1408 566l30 9M1420 562l20 5M1500 562l40-2M1495 572l65-3M1505 582l55 8M1412 575l24 4" stroke="#4f8fc4" stroke-width="3.500" stroke-dasharray="2 3" opacity=".85"/>
<use href="#apple" transform="translate(1425 533) scale(.84 .77)" fill="url(#red)"/>
<use href="#apple" transform="translate(1484 546) scale(.85 .65)" fill="url(#red)"/>
<use href="#apple" transform="translate(1463 581)" fill="url(#red)"/>
<path d="M1463 561v-6M1483 534l-2 6M1430 520l5-4" stroke="#3a1a0a" stroke-width="1.500"/>
<ellipse cx="1445" cy="573" rx="7" ry="4" fill="#ffb0a8" opacity=".55"/><ellipse cx="1411" cy="526" rx="6" ry="4" fill="#ffb0a8" opacity=".5"/><ellipse cx="1470" cy="538" rx="5" ry="3" fill="#ffb0a8" opacity=".45"/>
</g>
<use href="#heart" x="1535" y="473.500" stroke="#6b6b6b"/>
<circle cx="1414" cy="660" r="16" fill="#1b5e37"/><path d="M1406 660.500h16M1414 652.500v16" stroke="#fff" stroke-width="2"/>
<text x="1523.500" y="657" textLength="36.500" lengthAdjust="spacingAndGlyphs" style="font-size:14px;fill:#111">Apple</text>
<text class="a" x="1561" y="677" textLength="71" lengthAdjust="spacingAndGlyphs" style="font-size:10.500px;fill:#f4a91f">100جنية / الكيلو</text>
<!-- Card right -->
<rect x="1585" y="460" width="180" height="236" rx="16" fill="#f3f5f7" filter="url(#sh)"/>
<path d="M1585 608V476a16 16 0 0 1 16-16h148a16 16 0 0 1 16 16v132a16 16 0 0 1-16 16H1601a16 16 0 0 1-16-16Z" fill="#d4aca3"/>
<ellipse cx="1680" cy="603" rx="36" ry="7" fill="#c79a8c" opacity=".7"/>
<path d="M1720 545h30M1716 552h38M1716 559h42M1718 566h38M1722 573h26" stroke="#eed9cf" stroke-width="1" stroke-dasharray="1 3" opacity=".9"/>
<path d="M1665 512C1675 510 1688 518 1695 535 1700 550 1698 560 1695 570L1678 568C1672 555 1665 530 1665 512Z" fill="#efe6b5"/>
<path d="M1614 549C1628 543 1650 543 1668 549 1678 552 1684 562 1684 572L1676 580C1670 565 1650 553 1630 552 1624 552 1618 551 1614 549Z" fill="#eab92c"/>
<path d="M1668 550C1676 552 1684 562 1684 572L1678 568C1672 560 1670 555 1668 550Z" fill="#efe3a6"/>
<path d="M1697 560C1700 545 1705 538 1710 540 1716 545 1717 558 1715 563Z" fill="#e9a91b"/>
<path d="M1636 598C1640 585 1655 570 1670 562 1680 558 1692 558 1694 562 1694 572 1688 582 1678 590 1665 600 1650 605 1640 605 1637 603 1635 601 1636 598Z" fill="#f0b82c"/>
<path d="M1640 605C1650 605 1665 600 1678 590 1672 590 1655 596 1638 599Z" fill="#d99a17"/>
<path d="M1690 562C1700 560 1712 565 1722 572 1720 582 1718 592 1710 597 1702 597 1694 594 1690 588 1692 580 1694 570 1690 562Z" fill="#efe3a6"/>
<circle cx="1637" cy="601" r="3" fill="#3a2a1a"/>
<use href="#heart" x="1731" y="473.500" stroke="#555"/>
<circle cx="1609" cy="660" r="16" fill="#1b5e37"/><path d="M1601 660.500h16M1609 652.500v16" stroke="#fff" stroke-width="2"/>
<text x="1707" y="657" textLength="49" lengthAdjust="spacingAndGlyphs" style="font-size:14px;fill:#111">Banaba</text>
<text class="a" x="1756" y="677" textLength="64" lengthAdjust="spacingAndGlyphs" style="font-size:10.500px;fill:#f4a91f">50جنية / الكيلو</text>
<!-- Nav -->
<path d="M1374 939V911a28 28 0 0 1 28-28h351a28 28 0 0 1 28 28v28Z" fill="#fff" filter="url(#sh2)"/>
<rect x="1690" y="896" width="80" height="30" rx="15" fill="#eee"/>
<circle cx="1755" cy="911" r="15" fill="#1b5e37"/>
<path d="M1755 904l7 5v7a1 1 0 0 1-1 1h-12a1 1 0 0 1-1-1v-7Z" fill="#fff"/><rect x="1754.500" y="912" width="1" height="2" fill="#1b5e37"/>
<text class="a" x="1732" y="915" textLength="36" lengthAdjust="spacingAndGlyphs" style="font-size:11px;fill:#1b5e37">الرئيسية</text>
<g fill="none" stroke="#6f7275" stroke-width="1.100">
<rect x="1621" y="904.500" width="6" height="6" rx="1"/><rect x="1629" y="904.500" width="6" height="6" rx="1"/><rect x="1621" y="912.500" width="6" height="6" rx="1"/><rect x="1629" y="912.500" width="6" height="6" rx="1"/>
<path d="M1519 904h3l2 12h9l1-10h-11M1524 907h10"/>
<circle cx="1424.500" cy="906" r="3.700"/><path d="M1418 917.500c1-4 4-6 6.500-6s5.500 2 6.500 6"/>
</g>
<circle cx="1524" cy="917.500" r="1.100" fill="#6f7275"/><circle cx="1529.500" cy="917.500" r="1.100" fill="#6f7275"/>
</g>
<rect x="1523.500" y="949" width="107.500" height="4" rx="2" fill="#e8e8e8"/>

<!-- Emulator toolbar -->
<rect x="1809" y="39" width="80" height="642" fill="#263238"/>
<path d="M1827 57h8" stroke="#fff" stroke-width="1.300"/>
<path d="M1861 53 1869 61M1869 53 1861 61" stroke="#fff" stroke-width="1.400"/>
<path d="M1848 88v10M1842 92a10.500 10.500 0 1 0 12 0" class="em"/>
<path d="M1836 148h5l7-6v22l-7-6h-5Z" fill="#fff"/><path d="M1850 147a7 7 0 0 1 0 12Z" fill="#fff"/><path d="M1853 142a12 12 0 0 1 0 22" class="em" style="stroke-width:2"/>
<path d="M1839 203h4l6-6v22l-6-6h-4Z" fill="#fff"/><path d="M1851 202a7 7 0 0 1 0 12Z" fill="#fff"/>
<path d="M1836 255h6l2-3h8l2 3h6v18h-24Z" fill="#fff"/><circle cx="1848" cy="264" r="4.500" fill="none" stroke="#263238" stroke-width="2"/>
<circle cx="1845" cy="315" r="7.500" fill="none" stroke="#fff" stroke-width="2"/><path d="M1851 321 1857 328M1842 315h6M1845 312v6" stroke="#fff" stroke-width="1.800"/>
<rect x="1842" y="361" width="12" height="26" rx="2" transform="rotate(-45 1848 374)" class="em"/><path d="M1853 360a14 14 0 0 1 9 8M1843 388a14 14 0 0 1-9-8" class="em" style="stroke-width:1.500"/>
<rect x="1842" y="418" width="12" height="26" rx="2" transform="rotate(45 1848 431)" class="em"/><path d="M1839 420a14 14 0 0 1 10-7M1854 413l-5 0" class="em" style="stroke-width:1.500"/>
<path d="M1856 476v14l-11-7Z" class="em" style="stroke-width:2"/>
<circle cx="1848" cy="538" r="8" fill="none" stroke="#fff" stroke-width="2"/>
<rect x="1840" y="585.500" width="16" height="16" fill="none" stroke="#fff" stroke-width="2"/>
<g fill="#fff"><circle cx="1841" cy="648" r="2.500"/><circle cx="1848" cy="648" r="2.500"/><circle cx="1855" cy="648" r="2.500"/></g>
</svg>
</body></html>
